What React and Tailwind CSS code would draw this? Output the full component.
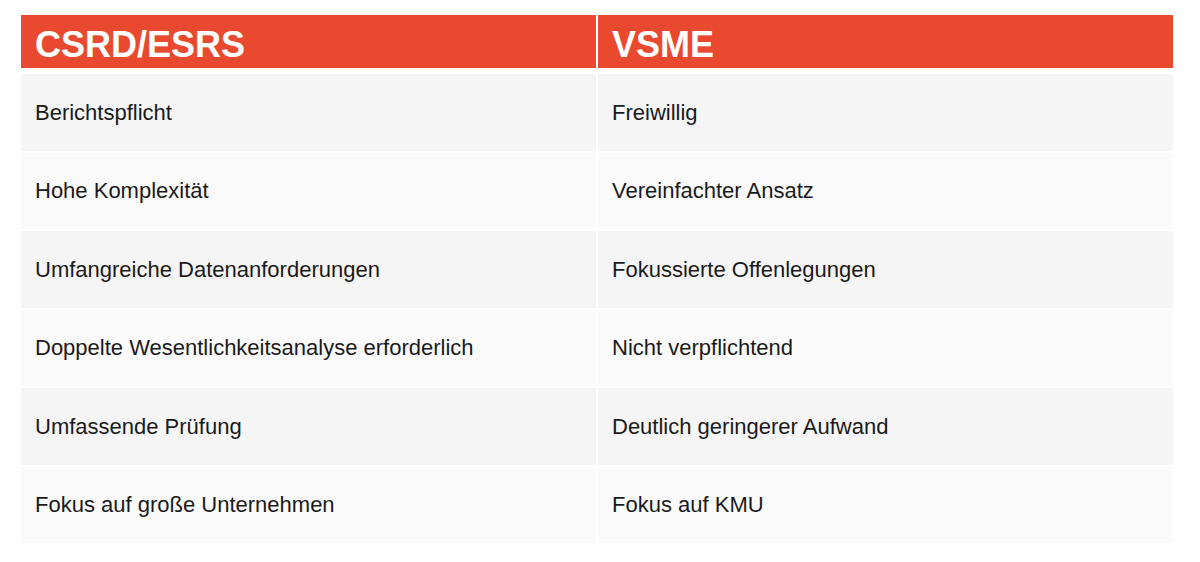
const rows = [
  ["Berichtspflicht", "Freiwillig"],
  ["Hohe Komplexität", "Vereinfachter Ansatz"],
  ["Umfangreiche Datenanforderungen", "Fokussierte Offenlegungen"],
  ["Doppelte Wesentlichkeitsanalyse erforderlich", "Nicht verpflichtend"],
  ["Umfassende Prüfung", "Deutlich geringerer Aufwand"],
  ["Fokus auf große Unternehmen", "Fokus auf KMU"],
];

export default function App() {
  return (
    <div className="w-[1200px] h-[562px] bg-white pt-[15px] pl-[21px] font-['Liberation_Sans',Arial,sans-serif]">
      <div className="w-[1152px]">
        {/* Header */}
        <div className="grid grid-cols-2 gap-x-[2px] h-[53px]">
          <div className="bg-[#e8492f] flex items-center pt-[6px] px-[14px] text-white font-bold text-[36px] leading-none">CSRD/ESRS</div>
          <div className="bg-[#e8492f] flex items-center pt-[6px] px-[14px] text-white font-bold text-[36px] leading-none">VSME</div>
        </div>

        {/* Rows */}
        <div className="mt-[6px] grid grid-cols-2 grid-rows-6 gap-[2px] h-[469px]">
          {rows.map(([a, b], i) => [
            <div key={`a${i}`} className={`flex items-center px-[14px] text-[22px] text-[#1a1a1a] ${i % 2 === 0 ? "bg-[#f5f5f5]" : "bg-[#fafafa]"}`}>{a}</div>,
            <div key={`b${i}`} className={`flex items-center px-[14px] text-[22px] text-[#1a1a1a] ${i % 2 === 0 ? "bg-[#f5f5f5]" : "bg-[#fafafa]"}`}>{b}</div>,
          ])}
        </div>
      </div>
    </div>
  );
}
